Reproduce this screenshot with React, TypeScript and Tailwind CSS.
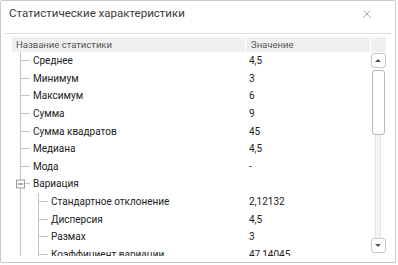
import React from "react";

type Row = {
  label: string;
  value: string;
  level: number;
  group?: boolean;
};

const rows: Row[] = [
  { label: "Среднее", value: "4,5", level: 0 },
  { label: "Минимум", value: "3", level: 0 },
  { label: "Максимум", value: "6", level: 0 },
  { label: "Сумма", value: "9", level: 0 },
  { label: "Сумма квадратов", value: "45", level: 0 },
  { label: "Медиана", value: "4,5", level: 0 },
  { label: "Мода", value: "-", level: 0 },
  { label: "Вариация", value: "", level: 0, group: true },
  { label: "Стандартное отклонение", value: "2,12132", level: 1 },
  { label: "Дисперсия", value: "4,5", level: 1 },
  { label: "Размах", value: "3", level: 1 },
  { label: "Коэффициент вариации", value: "47,14045", level: 1 },
];

const TreeIndent = ({ row }: { row: Row }) => {
  if (row.group) {
    return (
      <span className="relative flex h-full w-[13px] shrink-0 items-center border-l border-[#c4c4c4]">
        <span className="h-px w-[9px] bg-[#c4c4c4]" />
        {/* expand / collapse box sits over the guide line */}
        <span className="absolute left-[-5px] top-1/2 flex h-[9px] w-[9px] -translate-y-1/2 items-center justify-center border border-[#9a9a9a] bg-white">
          <span className="h-px w-[5px] bg-[#555]" />
        </span>
      </span>
    );
  }
  return (
    <>
      {row.level === 1 && <span className="h-full w-[18px] shrink-0 border-l border-[#c4c4c4]" />}
      <span className="flex h-full w-[13px] shrink-0 items-center border-l border-[#c4c4c4]">
        <span className="h-px w-[9px] bg-[#c4c4c4]" />
      </span>
    </>
  );
};

const Scrollbar = () => (
  <div className="flex w-[16px] shrink-0 flex-col items-center pt-px">
    <div className="flex h-[15px] w-[15px] shrink-0 items-center justify-center rounded-[3px] border border-[#c6c6c6] bg-white">
      <span className="h-0 w-0 border-x-[3px] border-b-[3px] border-x-transparent border-b-[#555]" />
    </div>
    <div className="mt-[2px] h-[65px] w-[13px] shrink-0 rounded-[3px] border border-[#b8b8b8] bg-white" />
    <div className="w-[6px] flex-1 border-x border-[#e2e2e2] bg-[#f4f4f4]" />
    <div className="mb-[3px] flex h-[15px] w-[15px] shrink-0 items-center justify-center rounded-[3px] border border-[#c6c6c6] bg-white">
      <span className="h-0 w-0 border-x-[3px] border-t-[3px] border-x-transparent border-t-[#555]" />
    </div>
  </div>
);

export default function App() {
  return (
    <div className="h-[265px] w-[398px] bg-white font-['Roboto',sans-serif]">
      <div className="flex h-[263px] w-[396px] flex-col overflow-hidden rounded-[2px] border border-[#c9c9c9] bg-white">
        {/* title bar */}
        <div className="mx-[4px] flex h-[33px] shrink-0 items-center justify-between border-b border-[#dcdcdc] pb-[7px] pl-[4px] pr-[20px]">
          <span className="text-[11.5px] text-[#3a3a3a]">Статистические характеристики</span>
          <svg width="8" height="8" viewBox="0 0 8 8">
            <path d="M0.5 0.5 L7.5 7.5 M7.5 0.5 L0.5 7.5" stroke="#a8a8a8" strokeWidth="1" />
          </svg>
        </div>

        {/* table */}
        <div className="flex min-h-0 flex-1 flex-col pb-[6px] pl-[11px] pr-[9px] pt-[3px]">
          <div className="flex h-[15px] shrink-0 text-[9.5px] leading-[15px] text-[#555]">
            <div className="w-[233px] bg-[#efefef] pl-[4px]">Название статистики</div>
            <div className="ml-px w-[124px] bg-[#efefef] pl-[5px]">Значение</div>
            <div className="ml-px w-[15px] bg-[#efefef]" />
          </div>
          <div className="flex min-h-0 flex-1">
            <div className="min-h-0 flex-1 overflow-hidden">
              {rows.map((row, i) => (
                <div key={i} className="flex h-[17.6px] text-[10px] text-[#222]">
                  <div className="flex w-[233px] items-center pl-[8px]">
                    <TreeIndent row={row} />
                    <span>{row.label}</span>
                  </div>
                  <div className="flex items-center pl-[4px]">{row.value}</div>
                </div>
              ))}
            </div>
            <Scrollbar />
          </div>
        </div>
      </div>
    </div>
  );
}
